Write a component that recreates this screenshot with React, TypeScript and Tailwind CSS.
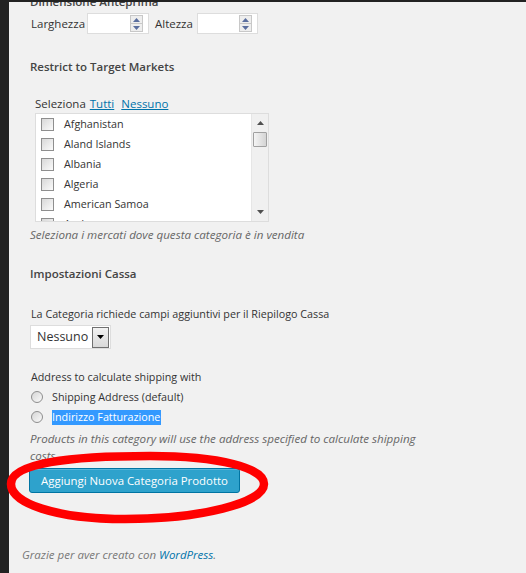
import React from "react";

const font = { fontFamily: '"Open Sans", "Noto Sans", sans-serif' };

function Spinner() {
  return (
    <div className="flex flex-col w-[13px] h-[17px] border border-[#c8c8c8] bg-[#eeeeee]">
      <div className="flex-1 flex items-center justify-center border-b border-[#c8c8c8]">
        <svg width="7" height="4" viewBox="0 0 7 4"><path d="M0 4 L3.5 0 L7 4 Z" fill="#5a6e9e" /></svg>
      </div>
      <div className="flex-1 flex items-center justify-center">
        <svg width="7" height="4" viewBox="0 0 7 4"><path d="M0 0 L3.5 4 L7 0 Z" fill="#5a6e9e" /></svg>
      </div>
    </div>
  );
}

function NumInput({ w }: { w: string }) {
  return (
    <div className={`${w} h-[21px] border border-[#dddddd] bg-white flex items-center justify-end pr-[5px]`}>
      <Spinner />
    </div>
  );
}

function Checkbox() {
  return (
    <div className="w-[13px] h-[13px] border border-[#8e8e8e] bg-gradient-to-br from-[#d8d8d8] to-[#fbfbfb] shrink-0" />
  );
}

function Radio() {
  return (
    <div className="w-[12px] h-[12px] rounded-full border border-[#8e8e8e] bg-gradient-to-br from-[#d6d6d6] to-[#fafafa] shrink-0" />
  );
}

const countries = ["Afghanistan", "Aland Islands", "Albania", "Algeria", "American Samoa", "Andorra"];

export default function App() {
  return (
    <div className="relative w-[526px] h-[573px] overflow-hidden flex bg-[#f1f1f1]" style={font}>
      <div className="w-[9px] h-full bg-[#222222] shrink-0" />
      <div className="flex-1 flex flex-col min-w-0">
        <div className="h-[2px] bg-[#222222] shrink-0" />
        <div className="flex-1 overflow-hidden flex flex-col text-[10.75px] text-[#333333]">
          <div className="-mt-[8px] h-[16px] pl-[21px] flex items-center text-[11.5px] font-semibold text-[#444444] leading-none">
            Dimensione Anteprima
          </div>
          <div className="mt-[3px] h-[21px] pl-[22px] flex items-center text-[11.5px]">
            <span className="w-[56px]">Larghezza</span>
            <NumInput w="w-[62px]" />
            <span className="ml-[6px] w-[42px]">Altezza</span>
            <NumInput w="w-[61px]" />
          </div>
          <div className="mt-[24px] h-[18px] pl-[21px] flex items-center text-[11.5px] font-semibold text-[#444444]">
            Restrict to Target Markets
          </div>
          <div className="mt-[20px] h-[16px] pl-[26px] flex items-center gap-[4px] text-[11.5px]">
            <span>Seleziona</span>
            <span className="text-[#0073aa] underline">Tutti</span>
            <span className="ml-[3px] text-[#0073aa] underline">Nessuno</span>
          </div>
          <div className="mt-[1px] ml-[26px] w-[234px] h-[109px] border border-[#dddddd] bg-white flex overflow-hidden">
            <div className="flex-1 flex flex-col">
              {countries.map((c) => (
                <div key={c} className="h-[20px] shrink-0 flex items-center pl-[5px] gap-[10px]">
                  <Checkbox />
                  <span>{c}</span>
                </div>
              ))}
            </div>
            <div className="w-[17px] bg-[#f0f0f0] border-l border-[#e6e6e6] flex flex-col items-center">
              <div className="h-[18px] flex items-center justify-center">
                <svg width="7" height="4" viewBox="0 0 7 4"><path d="M0 4 L3.5 0 L7 4 Z" fill="#505050" /></svg>
              </div>
              <div className="w-[14px] h-[15px] border border-[#a0a0a0] rounded-[1px] bg-gradient-to-r from-[#f4f4f4] to-[#d4d4d4]" />
              <div className="flex-1" />
              <div className="h-[18px] flex items-center justify-center">
                <svg width="7" height="4" viewBox="0 0 7 4"><path d="M0 0 L3.5 4 L7 0 Z" fill="#505050" /></svg>
              </div>
            </div>
          </div>
          <div className="mt-[5px] h-[16px] pl-[21px] flex items-center italic text-[11.6px] text-[#666666]">
            Seleziona i mercati dove questa categoria è in vendita
          </div>
          <div className="mt-[22px] h-[18px] pl-[21px] flex items-center text-[11.5px] font-semibold text-[#444444]">
            Impostazioni Cassa
          </div>
          <div className="mt-[23px] h-[16px] pl-[22px] flex items-center">
            La Categoria richiede campi aggiuntivi per il Riepilogo Cassa
          </div>
          <div className="mt-[3px] ml-[21px] w-[81px] h-[24px] border border-[#dddddd] bg-white flex items-center">
            <span className="flex-1 pl-[6px] text-[12.5px] text-[#333333]">Nessuno</span>
            <div className="w-[17px] h-[21px] mr-[1px] border border-[#707070] bg-gradient-to-b from-[#f2f2f2] to-[#d9d9d9] flex items-center justify-center">
              <svg width="7" height="4" viewBox="0 0 7 4"><path d="M0 0 L3.5 4 L7 0 Z" fill="#000000" /></svg>
            </div>
          </div>
          <div className="mt-[20px] h-[16px] pl-[22px] flex items-center">
            Address to calculate shipping with
          </div>
          <div className="mt-[2px] h-[20px] pl-[22px] flex items-center gap-[9px]">
            <Radio />
            <span>Shipping Address (default)</span>
          </div>
          <div className="h-[20px] pl-[22px] flex items-center gap-[9px]">
            <Radio />
            <span className="bg-[#3399ff] text-white leading-[15px] pr-[1px]">Indirizzo Fatturazione</span>
          </div>
          <div className="mt-[3px] ml-[21px] w-[400px] italic text-[11.6px] text-[#666666] leading-[17px]">
            Products in this category will use the address specified to calculate shipping costs
          </div>
          <div className="mt-[4px] ml-[20px]">
            <button className="h-[25px] w-[211px] rounded-[3px] border border-[#0074a2] bg-[#2ea2cc] text-white text-[11.4px] shadow-[inset_0_1px_0_rgba(120,200,230,0.5)] flex items-center justify-center">
              Aggiungi Nuova Categoria Prodotto
            </button>
          </div>
          <div className="mt-[54px] h-[16px] pl-[13px] flex items-center italic text-[11.5px] text-[#777777]">
            Grazie per aver creato con&nbsp;<span className="text-[#0073aa]">WordPress</span>.
          </div>
        </div>
      </div>
      <svg className="absolute left-0 top-0 pointer-events-none" width="526" height="573" viewBox="0 0 526 573">
        <path
          d="M 11 484 C 11 463, 70 456, 150 456 C 220 456, 264 468, 264 484 C 264 503, 200 519, 125 519 C 55 519, 11 503, 11 484 Z"
          fill="none"
          stroke="#ff0000"
          strokeWidth="8.5"
        />
      </svg>
    </div>
  );
}
